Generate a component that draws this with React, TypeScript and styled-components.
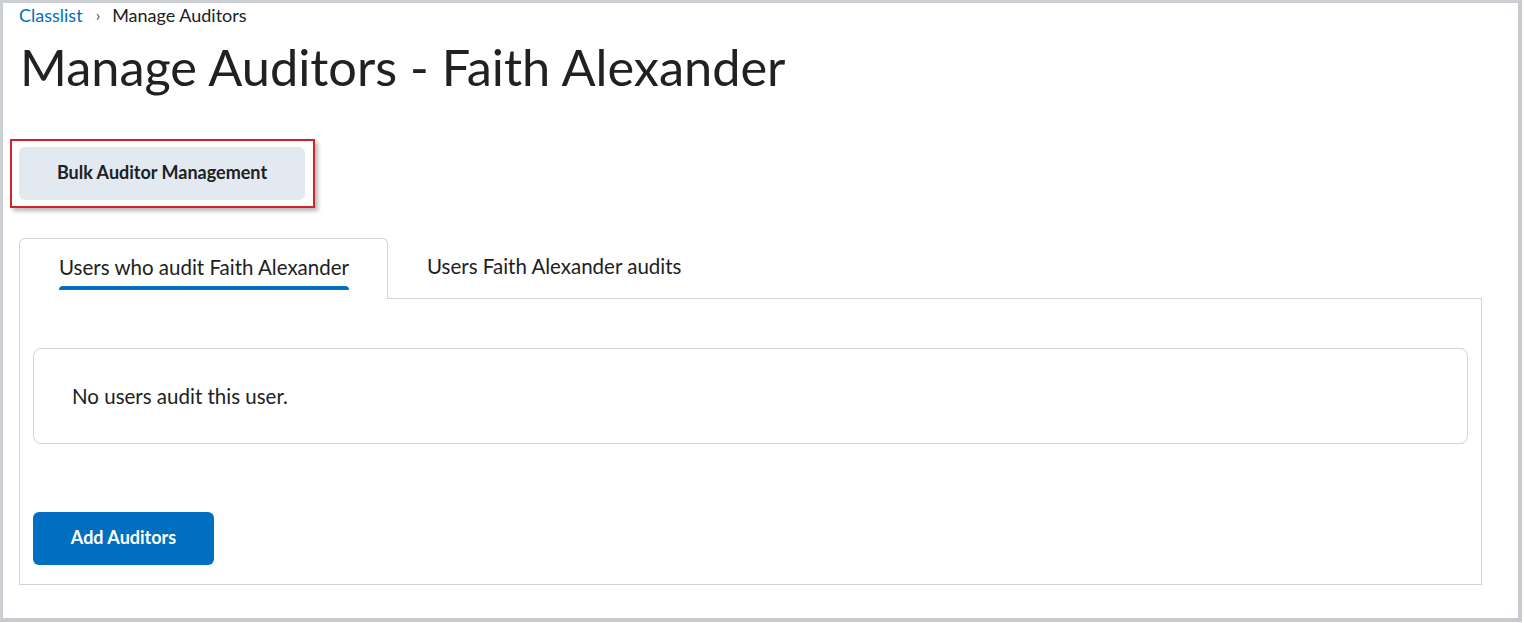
import styled, { createGlobalStyle } from "styled-components";

const GlobalStyle = createGlobalStyle`
  html, body {
    margin: 0;
    padding: 0;
    background: #ffffff;
  }
  body {
    font-family: Lato, "Open Sans", Arial, sans-serif;
    color: #202122;
  }
`;

const Frame = styled.div`
  box-sizing: border-box;
  width: 1522px;
  height: 622px;
  border-top: 3px solid #cbced2;
  border-left: 3px solid #cbced2;
  border-right: 4px solid #c6c9cd;
  border-bottom: 4px solid #c6c9cd;
  background: #ffffff;
  padding: 0 36px 0 16px;
  overflow: hidden;
`;

const Breadcrumbs = styled.nav`
  display: flex;
  align-items: center;
  height: 24px;
  font-size: 18px;
  line-height: 24px;
`;

const Crumb = styled.a`
  color: #006fbf;
  text-decoration: none;
`;

const Chevron = styled.span`
  margin: 0 12px 0 13px;
  font-size: 16px;
  color: #494c4e;
`;

const Current = styled.span`
  color: #202122;
`;

const Title = styled.h1`
  margin: 10px 0 0 1px;
  font-size: 50.5px;
  font-weight: 400;
  line-height: 60px;
  letter-spacing: 0;
  color: #202122;
`;

const Highlight = styled.div`
  display: inline-block;
  margin: 42px 0 0 -9px;
  padding: 6px 8px 6px 7px;
  border: 2px solid #d1232c;
  box-shadow: 3px 3px 4px rgba(0, 0, 0, 0.28);
`;

const SecondaryButton = styled.button`
  display: block;
  width: 286px;
  height: 53px;
  padding: 0 0 3px;
  border: none;
  border-radius: 6px;
  background: #e3e9f1;
  color: #202122;
  font-family: inherit;
  font-size: 18px;
  font-weight: 700;
`;

const Tabs = styled.div`
  display: flex;
  align-items: flex-end;
  margin-top: 30px;
`;

const Tab = styled.div<{ $active?: boolean }>`
  box-sizing: border-box;
  height: 61px;
  display: flex;
  flex-direction: column;
  align-items: center;
  padding: 0 38px 0 39px;
  border: 1px solid #cdd5dc;
  border-bottom: none;
  border-radius: 6px 6px 0 0;
  ${(p) =>
    !p.$active &&
    "border: none; border-radius: 0; border-bottom: 1px solid #cdd5dc;"}
`;

const TabLabel = styled.span`
  margin-top: 16px;
  font-size: 20.5px;
  line-height: 25px;
  color: #202122;
`;

const TabBar = styled.span`
  align-self: stretch;
  height: 4px;
  margin-top: 6px;
  border-radius: 4px 4px 0 0;
  background: #006fbf;
`;

const TabFill = styled.div`
  flex: 1;
  height: 61px;
  box-sizing: border-box;
  border-bottom: 1px solid #cdd5dc;
`;

const Panel = styled.section`
  box-sizing: border-box;
  height: 286px;
  border: 1px solid #cdd5dc;
  border-top: none;
  padding: 49px 13px 0 13px;
`;

const EmptyCard = styled.div`
  box-sizing: border-box;
  height: 96px;
  border: 1px solid #cdd5dc;
  border-radius: 8px;
  display: flex;
  align-items: center;
  padding-left: 38px;
  font-size: 20.5px;
  color: #202122;
`;

const PrimaryButton = styled.button`
  display: block;
  margin-top: 68px;
  width: 181px;
  height: 53px;
  padding: 0 0 3px;
  border: none;
  border-radius: 6px;
  background: #006fbf;
  color: #ffffff;
  font-family: inherit;
  font-size: 18px;
  font-weight: 700;
`;

export default function App() {
  return (
    <>
      <GlobalStyle />
      <Frame>
        <Breadcrumbs>
          <Crumb href="#">Classlist</Crumb>
          <Chevron>›</Chevron>
          <Current>Manage Auditors</Current>
        </Breadcrumbs>
        <Title>Manage Auditors - Faith Alexander</Title>
        <Highlight>
          <SecondaryButton>Bulk Auditor Management</SecondaryButton>
        </Highlight>
        <Tabs>
          <Tab $active>
            <TabLabel>Users who audit Faith Alexander</TabLabel>
            <TabBar />
          </Tab>
          <Tab>
            <TabLabel>Users Faith Alexander audits</TabLabel>
          </Tab>
          <TabFill />
        </Tabs>
        <Panel>
          <EmptyCard>No users audit this user.</EmptyCard>
          <PrimaryButton>Add Auditors</PrimaryButton>
        </Panel>
      </Frame>
    </>
  );
}
